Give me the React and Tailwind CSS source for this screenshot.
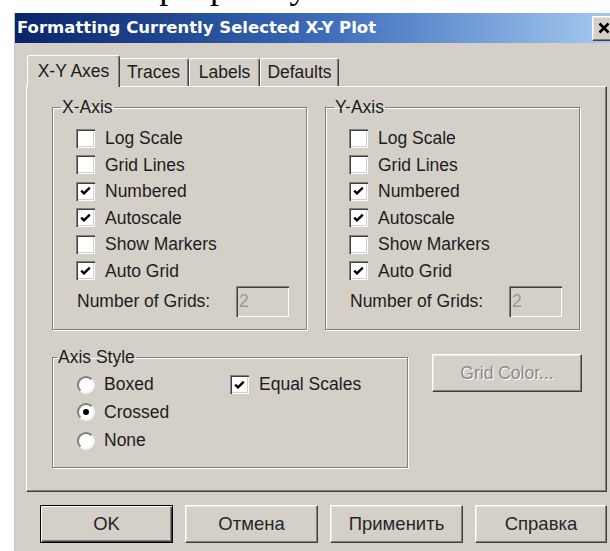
import React from "react";

const raised =
  "border border-t-white border-l-white border-r-[#404040] border-b-[#404040] shadow-[inset_-1px_-1px_0_#808080,inset_1px_1px_0_#e8e6e1]";

function Check() {
  return (
    <svg width="11" height="10" viewBox="0 0 11 10">
      <path d="M1.2 4.6 L4 7.4 L9.8 1.6" fill="none" stroke="#000" strokeWidth="2.3" />
    </svg>
  );
}

function CheckBox({ checked }) {
  return (
    <span className="w-[19px] h-[19px] shrink-0 flex items-center justify-center bg-white shadow-[inset_1px_1px_0_#808080,inset_2px_2px_0_#404040,inset_-1px_-1px_0_#ffffff,inset_-2px_-2px_0_#d4d0c8]">
      {checked && <Check />}
    </span>
  );
}

function Radio({ checked }) {
  return (
    <span className="w-[18px] h-[18px] shrink-0 rounded-full flex items-center justify-center bg-white border-2 border-t-[#808080] border-l-[#808080] border-r-[#f4f3f0] border-b-[#f4f3f0]">
      {checked && <span className="w-[6px] h-[6px] rounded-full bg-black" />}
    </span>
  );
}

function Row({ checked, label }) {
  return (
    <div className="h-[26.5px] flex items-center gap-[10px]">
      <CheckBox checked={checked} />
      <span>{label}</span>
    </div>
  );
}

function AxisGroup({ title }) {
  const rows = [
    ["Log Scale", false],
    ["Grid Lines", false],
    ["Numbered", true],
    ["Autoscale", true],
    ["Show Markers", false],
    ["Auto Grid", true],
  ];
  return (
    <fieldset className="w-[255px] h-[233px] border border-[#808080] shadow-[1px_1px_0_#fff,inset_1px_1px_0_#fff] pl-[23px] pr-[10px]">
      <legend className="-ml-[15px] px-[1px] leading-[20px]">{title}</legend>
      <div className="pt-[8px] flex flex-col">
        {rows.map(([l, c]) => (
          <Row key={l} label={l} checked={c} />
        ))}
        <div className="mt-[2px] flex items-center">
          <span className="w-[160px] pl-[1px]">Number of Grids:</span>
          <span className="w-[53px] h-[31px] flex items-center pl-[3px] text-[#9a9894] shadow-[inset_1px_1px_0_#808080,inset_2px_2px_0_#404040,inset_-1px_-1px_0_#ffffff,inset_-2px_-2px_0_#d4d0c8]">
            2
          </span>
        </div>
      </div>
    </fieldset>
  );
}

function Tab({ label, active, w }) {
  return (
    <div
      className={
        "flex items-center justify-center rounded-t-[3px] border-t border-l border-r border-t-white border-l-white border-r-[#404040] shadow-[inset_-1px_0_0_#808080] bg-[#d4d0c8] " +
        (active ? "h-[32px] -mb-px relative z-10 -mr-[2px]" : "h-[28px]")
      }
      style={{ width: w }}
    >
      {label}
    </div>
  );
}

function Button({ children, def, disabled, w = "w-[133px]" }) {
  const cls = def
    ? "border border-black shadow-[inset_1px_1px_0_#fff,inset_-1px_-1px_0_#404040,inset_-2px_-2px_0_#808080]"
    : raised;
  return (
    <div className={`${w} h-[38px] flex items-center justify-center bg-[#d4d0c8] ${cls}`}>
      <span className={disabled ? "text-[#8c8a86] [text-shadow:1px_1px_0_#fff]" : "text-[18.5px] text-[#262626]"}>
        {children}
      </span>
    </div>
  );
}

export default function App() {
  return (
    <div className="w-[610px] h-[551px] overflow-hidden bg-white font-['Liberation_Sans',Arial,sans-serif] text-[17.5px] text-[#1c1c1c]">
      {/* page text sitting above the window */}
      <div className="h-[13px] overflow-hidden">
        <p className="font-['Liberation_Serif',serif] text-[36px] leading-[36px] -mt-[32px] pl-[140px] text-black whitespace-nowrap">
          программу
        </p>
      </div>

      <div className="ml-[14px] w-[600px] h-[538px] bg-[#d4d0c8] border-l border-l-[#c8c6c1] flex flex-col">
        {/* title bar */}
        <div className="h-[30px] flex items-center bg-linear-to-r from-[#0a246a] via-[#3a6ab8] to-[#a6caf0]">
          <span className="flex-1 pl-[2px] text-white font-bold font-['DejaVu_Sans',Verdana,sans-serif] text-[16.5px] whitespace-nowrap">
            Formatting Currently Selected X-Y Plot
          </span>
          <div className={`w-[24px] h-[25px] mr-[-2px] flex items-center justify-center bg-[#d4d0c8] ${raised}`}>
            <svg width="12" height="12" viewBox="0 0 12 12">
              <path d="M1.5 1.5 L10.5 10.5 M10.5 1.5 L1.5 10.5" stroke="#000" strokeWidth="2.6" />
            </svg>
          </div>
        </div>

        {/* tabs */}
        <div className="mt-[12px] pl-[12px] flex items-end h-[31px]">
          <Tab label="X-Y Axes" active w={93} />
          <Tab label="Traces" w={71} />
          <Tab label="Labels" w={71} />
          <Tab label="Defaults" w={79} />
        </div>

        {/* tab page */}
        <div className="ml-[11px] w-[581px] h-[406px] border border-t-white border-l-white border-r-[#404040] border-b-[#404040] shadow-[inset_-1px_-1px_0_#808080] pl-[25px] pt-[10px] flex flex-col">
          <div className="flex gap-[18px]">
            <AxisGroup title="X-Axis" />
            <AxisGroup title="Y-Axis" />
          </div>

          <div className="mt-[17px] flex items-start gap-[24px]">
            <fieldset className="w-[356px] h-[121px] border border-[#808080] shadow-[1px_1px_0_#fff,inset_1px_1px_0_#fff] pl-[24px]">
              <legend className="-ml-[20px] px-[1px] leading-[20px]">Axis Style</legend>
              <div className="pt-[4px] flex">
                <div className="w-[153px] flex flex-col">
                  <div className="h-[27px] flex items-center gap-[9px]">
                    <Radio />
                    <span>Boxed</span>
                  </div>
                  <div className="h-[28px] flex items-center gap-[9px]">
                    <Radio checked />
                    <span>Crossed</span>
                  </div>
                  <div className="h-[29px] flex items-center gap-[9px]">
                    <Radio />
                    <span>None</span>
                  </div>
                </div>
                <div className="h-[27px] flex items-center gap-[10px]">
                  <CheckBox checked />
                  <span>Equal Scales</span>
                </div>
              </div>
            </fieldset>
            <div className="mt-[7px]">
              <Button disabled w="w-[150px]">Grid Color...</Button>
            </div>
          </div>
        </div>

        {/* dialog buttons */}
        <div className="mt-[13px] ml-[25px] flex gap-[12px]">
          <Button def>OK</Button>
          <Button>Отмена</Button>
          <Button>Применить</Button>
          <Button w="w-[132px]">Справка</Button>
        </div>
      </div>
    </div>
  );
}
